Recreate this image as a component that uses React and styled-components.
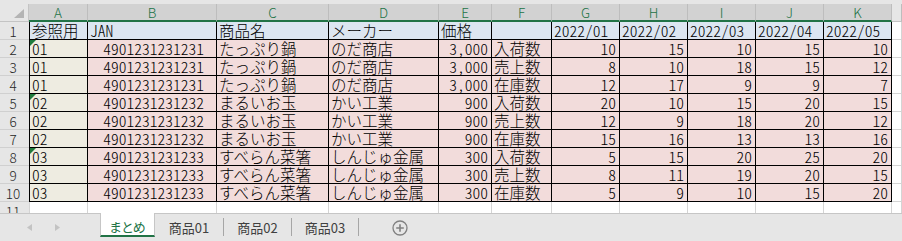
import React from 'react';
import styled, { createGlobalStyle } from 'styled-components';

const Global = createGlobalStyle`
  html, body { margin: 0; padding: 0; background: #fff; }
  #root { width: 902px; height: 241px; overflow: hidden; }
`;

const Frame = styled.div`
  width: 902px;
  height: 241px;
  display: flex;
  flex-direction: column;
  overflow: hidden;
  background: #fff;
  font-family: "Noto Sans CJK JP", sans-serif;
`;

const TopStrip = styled.div`
  height: 4px;
  flex: none;
  background: #e6e6e6;
`;

const Sheet = styled.div`
  flex: 1;
  min-height: 0;
  overflow: hidden;
  display: grid;
  grid-template-columns: 29px 59px 129px 112px 110px 53px 60px 68px 68px 68px 68px 68px 1fr;
  grid-auto-rows: 18px;
`;

const Corner = styled.div`
  position: relative;
  background: #e6e6e6;
  border-right: 1px solid #c4c4c4;
  border-bottom: 1px solid #c4c4c4;
  box-sizing: border-box;
  display: flex;
  align-items: flex-end;
  justify-content: flex-end;
  padding: 0 4px 3px 0;
`;

const ColHead = styled.div`
  box-sizing: border-box;
  background: ${p => (p.$selected ? '#d2d2d2' : '#e6e6e6')};
  border-right: 1px solid #bdbdbd;
  border-bottom: ${p => (p.$selected ? '2px solid #217346' : '1px solid #c4c4c4')};
  color: #217346;
  font-size: 13.5px;
  font-weight: 300;
  display: flex;
  align-items: center;
  justify-content: center;
  line-height: 15px;
`;

const RowHead = styled.div`
  box-sizing: border-box;
  background: #e6e6e6;
  border-bottom: 1px solid #d0d0d0;
  color: #262626;
  font-size: 13.5px;
  font-weight: 300;
  display: flex;
  align-items: center;
  justify-content: center;
  padding-right: 3px;
  line-height: 16px;
`;

const Cell = styled.div`
  position: relative;
  box-sizing: border-box;
  background: ${p => p.$bg};
  border-right: 1px solid ${p => p.$line};
  border-bottom: 1px solid ${p => p.$line};
  border-left: ${p => (p.$edge ? `1px solid ${p.$line}` : 'none')};
  font-size: 15.5px;
  font-weight: 300;
  font-feature-settings: "hwid";
  color: #000;
  display: flex;
  align-items: center;
  justify-content: ${p => (p.$align === 'right' ? 'flex-end' : 'flex-start')};
  padding: 0 ${p => p.$padR}px 0 2px;
  white-space: nowrap;
  overflow: hidden;
  line-height: 17px;
`;

const ErrorMark = styled.span`
  position: absolute;
  left: 0;
  top: 0;
  width: 0;
  height: 0;
  border-top: 6px solid #1e7b3c;
  border-right: 6px solid transparent;
`;

const TabBar = styled.div`
  height: 28px;
  flex: none;
  box-sizing: border-box;
  background: #e6e6e6;
  border-top: 1px solid #c6c6c6;
  display: flex;
  align-items: flex-start;
  font-family: "Noto Sans CJK JP", sans-serif;
`;

const Nav = styled.div`
  width: 100px;
  height: 27px;
  display: flex;
  align-items: center;
  gap: 23px;
  padding-left: 27px;
  box-sizing: border-box;
`;

const Tab = styled.div`
  box-sizing: border-box;
  width: ${p => p.$w}px;
  height: ${p => (p.$active ? 24 : 22)}px;
  padding-top: 5px;
  display: flex;
  justify-content: center;
  align-items: center;
  font-size: 13px;
  font-feature-settings: "palt";
  color: ${p => (p.$active ? '#217346' : '#404040')};
  background: ${p => (p.$active ? '#fff' : 'transparent')};
  border-bottom: ${p => (p.$active ? '2px solid #217346' : 'none')};
  border-left: ${p => (p.$active ? '1px solid #c6c6c6' : 'none')};
  border-right: ${p => (p.$active ? '1px solid #c6c6c6' : 'none')};
  margin-top: ${p => (p.$active ? -1 : 0)}px;
`;

const TabSep = styled.div`
  width: 1px;
  height: 18px;
  margin-top: 4px;
  background: #a6a6a6;
  flex: none;
`;

const AddButton = styled.div`
  margin-left: 33px;
  height: 27px;
  display: flex;
  align-items: center;
`;

const PINK = '#f2dcdb';
const BLUE = '#dce6f1';
const TAN = '#eeece1';
const WHITE = '#fff';
const BLACK = '#000';
const GRID = '#d4d4d4';

const cols = ['A', 'B', 'C', 'D', 'E', 'F', 'G', 'H', 'I', 'J', 'K'];
const header = ['参照用', 'JAN', '商品名', 'メーカー', '価格', '', '2022/01', '2022/02', '2022/03', '2022/04', '2022/05'];

const items = [
  ['01', '4901231231231', 'たっぷり鍋', 'のだ商店', '3,000'],
  ['02', '4901231231232', 'まるいお玉', 'かい工業', '900'],
  ['03', '4901231231233', 'すべらん菜箸', 'しんじゅ金属', '300'],
];
const kinds = ['入荷数', '売上数', '在庫数'];
const values = [
  [10, 15, 10, 15, 10],
  [8, 10, 18, 15, 12],
  [12, 17, 9, 9, 7],
  [20, 10, 15, 20, 15],
  [12, 9, 18, 20, 12],
  [15, 16, 13, 13, 16],
  [5, 15, 20, 25, 20],
  [8, 11, 19, 20, 15],
  [5, 9, 10, 15, 20],
];

const rows = values.map((v, i) => {
  const it = items[Math.floor(i / 3)];
  return { code: it[0], jan: it[1], name: it[2], maker: it[3], price: it[4], kind: kinds[i % 3], v, mark: i % 3 === 0 };
});

const CornerTriangle = () => (
  <svg width="10" height="9" viewBox="0 0 10 9">
    <polygon points="10,0 10,9 0,9" fill="#b4b4b4" />
  </svg>
);

const ArrowLeft = () => (
  <svg width="5" height="7" viewBox="0 0 5 7">
    <polygon points="5,0 5,7 0,3.5" fill="#c3c3c3" />
  </svg>
);

const ArrowRight = () => (
  <svg width="5" height="7" viewBox="0 0 5 7">
    <polygon points="0,0 5,3.5 0,7" fill="#c3c3c3" />
  </svg>
);

const PlusCircle = () => (
  <svg width="16" height="16" viewBox="0 0 16 16">
    <circle cx="8" cy="8" r="7" fill="none" stroke="#808080" strokeWidth="1.3" />
    <path d="M8 4.2v7.6M4.2 8h7.6" stroke="#808080" strokeWidth="1.6" />
  </svg>
);

export default function App() {
  return (
    <Frame>
      <Global />
      <TopStrip />
      <Sheet>
        <Corner><CornerTriangle /></Corner>
        {cols.map(c => (
          <ColHead key={c} $selected>{c}</ColHead>
        ))}
        <ColHead />

        <RowHead>1</RowHead>
        {header.map((h, i) => (
          <Cell key={i} $bg={BLUE} $line={BLACK} $edge={i === 0} $padR={2}>{h}</Cell>
        ))}
        <Cell $bg={WHITE} $line={GRID} $padR={2} />

        {rows.map((r, ri) => (
          <React.Fragment key={ri}>
            <RowHead>{ri + 2}</RowHead>
            <Cell $bg={TAN} $line={BLACK} $edge $padR={2}>
              {r.mark && <ErrorMark />}
              {r.code}
            </Cell>
            <Cell $bg={PINK} $line={BLACK} $align="right" $padR={12}>{r.jan}</Cell>
            <Cell $bg={PINK} $line={BLACK} $padR={2}>{r.name}</Cell>
            <Cell $bg={PINK} $line={BLACK} $padR={2}>{r.maker}</Cell>
            <Cell $bg={PINK} $line={BLACK} $align="right" $padR={3}>{r.price}</Cell>
            <Cell $bg={PINK} $line={BLACK} $padR={2}>{r.kind}</Cell>
            {r.v.map((n, ni) => (
              <Cell key={ni} $bg={PINK} $line={BLACK} $align="right" $padR={3}>{n}</Cell>
            ))}
            <Cell $bg={WHITE} $line={GRID} $padR={2} />
          </React.Fragment>
        ))}

        <RowHead>11</RowHead>
        {cols.map((c, i) => (
          <Cell key={c} $bg={WHITE} $line={GRID} $edge={i === 0} $padR={2} />
        ))}
        <Cell $bg={WHITE} $line={GRID} $padR={2} />
      </Sheet>
      <TabBar>
        <Nav>
          <ArrowLeft />
          <ArrowRight />
        </Nav>
        <Tab $active $w={55}>まとめ</Tab>
        <Tab $w={68}>商品01</Tab>
        <TabSep />
        <Tab $w={67}>商品02</Tab>
        <TabSep />
        <Tab $w={66}>商品03</Tab>
        <TabSep />
        <AddButton><PlusCircle /></AddButton>
      </TabBar>
    </Frame>
  );
}
